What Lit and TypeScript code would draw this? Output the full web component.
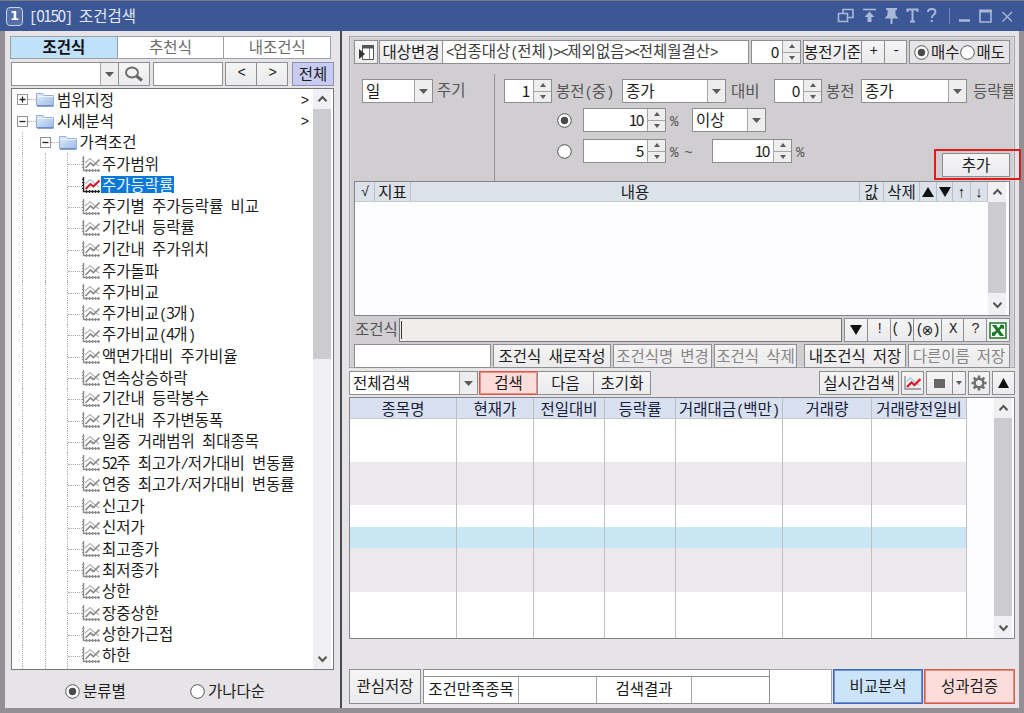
import { LitElement, html, css, svg } from "lit";
import { customElement } from "lit/decorators.js";

// Hangul keeps the page font; runs of other characters take a half-width cell each.
const t = (s: string) =>
  s.split(/([\uac00-\ud7a3]+|[0-9]+)/).filter(Boolean).map((p) =>
    /[\uac00-\ud7a3]/.test(p) ? p : html`<span class=${/[0-9]/.test(p) ? "d" : "n"}>${p}</span>`);

const w = (n: number) => `width:${n}px`;

const leaves = [
  "주가범위", "주가등락률", "주기별 주가등락률 비교", "기간내 등락률", "기간내 주가위치", "주가돌파", "주가비교",
  "주가비교(3개)", "주가비교(4개)", "액면가대비 주가비율", "연속상승하락", "기간내 등락봉수", "기간내 주가변동폭",
  "일중 거래범위 최대종목", "52주 최고가/저가대비 변동률", "연중 최고가/저가대비 변동률", "신고가", "신저가",
  "최고종가", "최저종가", "상한", "장중상한", "상한가근접", "하한",
];

const chart = (on: boolean) => html`<svg class="chart" width="18" height="16" viewBox="0 0 18 16" fill="none">
  <path d="M1.5 0V14.5H18" stroke=${on ? "#222" : "#8d8d8d"} stroke-width="1.4"/>
  <path d="M0 2.5H1.5M0 5.5H1.5M0 8.5H1.5M0 11.5H1.5M4.5 13V16M7.5 13V16M10.5 13V16M13.5 13V16M16.5 13V16" stroke=${on ? "#222" : "#8d8d8d"}/>
  <path d="M3 7L8 2.5L12 6L17 10" stroke=${on ? "#aac4d6" : "#b5b5b5"} stroke-width="1.2"/>
  <path d="M3.5 12L8.5 7L11.5 9.5L17.5 3.5" stroke=${on ? "#d8141c" : "#8d8d8d"} stroke-width=${on ? 2 : 1.7}/>
</svg>`;

const chartButton = html`<svg width="17" height="14" viewBox="0 0 17 14" fill="none">
  <path d="M1 0V13H17" stroke="#8c8c8c" stroke-width="1.3"/>
  <path d="M2.500 5.500L6 2L9.500 5L15 9" stroke="#a8cbe0" stroke-width="1.400"/>
  <path d="M3 11L7.500 6.500L10.500 9L16.500 3" stroke="#d8141c" stroke-width="2.200"/>
</svg>`;

const folder = html`<svg class="folder" width="18" height="15" viewBox="0 0 18 15">
  <defs><linearGradient id="f" x1="0" y1="0" x2="1" y2="1"><stop offset="0" stop-color="#e3edfb"/><stop offset="1" stop-color="#9dbbe8"/></linearGradient></defs>
  <path d="M.5 13.5V1.5H7L8.5 3.5H17.5V13.5Z" fill="url(#f)" stroke="#9ab0d3"/>
  <path d="M1 14H17.5" stroke="#5e7fb5" stroke-width="1.4"/><path d="M1.5 4.5H17" stroke="#f1f6fd"/>
</svg>`;

const box = (plus: boolean) => html`<svg class="exp" width="11" height="11" viewBox="0 0 11 11" fill="#fff">
  <rect x=".5" y=".5" width="10" height="10" stroke="#929292"/>
  <path d=${plus ? "M2.5 5.5H8.5M5.5 2.5V8.5" : "M2.5 5.5H8.5"} stroke="#222" stroke-width="1.3"/></svg>`;

const chev = (up: boolean) => html`<svg width="11" height="8" viewBox="0 0 11 8" fill="none">
  <path d=${up ? "M1.5 6.3L5.5 2L9.5 6.3" : "M1.5 1.7L5.5 6L9.5 1.7"} stroke="#555" stroke-width="2"/></svg>`;

const tri = (up: boolean, x: number, y: number, c = "#5c5c5c") => html`<svg width=${x} height=${y} viewBox="0 0 10 10" preserveAspectRatio="none">
  <path d=${up ? "M5 0L10 10H0Z" : "M0 0H10L5 10Z"} fill=${c}/></svg>`;

const radio = (on: boolean) => html`<svg class="radio" width="15" height="15" viewBox="0 0 15 15">
  <circle cx="7.5" cy="7.5" r="6.8" fill="#fff" stroke="#555"/>${on ? svg`<circle cx="7.5" cy="7.5" r="3.7" fill="#4a4a4a"/>` : ""}</svg>`;

const combo = (s: string, width: number, drop = 18) => html`<div class="field" style=${w(width)}>
  <span class="val">${t(s)}</span><span class="drop" style=${w(drop)}>${tri(false, 9, 5)}</span></div>`;

const spin = (s: string, width: number) => html`<div class="field" style=${w(width)}>
  <span class="val r">${t(s)}</span><span class="spin"><b>${tri(true, 6, 4)}</b><b>${tri(false, 6, 4)}</b></span></div>`;

const btn = (c: unknown, width: number, cls = "") => html`<div class="btn ${typeof c === "string" ? "txt" : ""} ${cls}" style=${w(width)}>${typeof c === "string" ? t(c) : c}</div>`;

const scroll = (thumb: number) => html`<div class="scroll"><span class="arr">${chev(true)}</span>
  <span class="thumb" style="height:${thumb}px"></span><span class="fill"></span><span class="arr">${chev(false)}</span></div>`;

@customElement("app-root")
export class AppRoot extends LitElement {
  static styles = css`
    :host { display: block; width: 1024px; height: 713px; overflow: hidden; }
    * { box-sizing: border-box; }
    svg { display: block; flex: none; }
    .win { position: relative; height: 713px; display: flex; flex-direction: column; background: #e6e4e7;
      font: 15.5px/20px "Noto Sans CJK KR", sans-serif; color: #1c1c1c; white-space: nowrap; }
    .n { font-family: "Liberation Mono", monospace; font-size: 14px; letter-spacing: -1.25px; white-space: pre; line-height: 1; }
    .d { letter-spacing: -1.45px; }
    .o { font: 14px/14px "DejaVu Sans", sans-serif; margin: 0 -1px; }
    .title { height: 31px; border-top: 1px solid #777b87; background: #3c5796; color: #e3e9f5; display: flex;
      align-items: center; padding: 0 9px 0 6px; flex: none; }
    .badge { width: 17px; height: 19px; border: 1.5px solid #c9d3e9; border-radius: 4px; background: #566fa9; color: #fff;
      font: bold 13px/16px "DejaVu Sans", sans-serif; text-align: center; margin-right: 6px; }
    .title .name { flex: 1; padding-bottom: 2px; }
    .body { flex: 1; display: flex; min-height: 0; border: solid #929094; border-width: 0 5px 5px; }
    .left { width: 335px; padding: 5px 0 0 5px; }
    .div { width: 2px; background: #4c4b50; }
    .right { flex: 1; padding: 5px 0 0 7px; min-width: 0; }
    .row { display: flex; }
    .tabs { width: 321px; height: 23px; border: 1px solid #98a0a8; }
    .tabs span { flex: 1; text-align: center; background: #fff; color: #6b6b6b; line-height: 18px; }
    .tabs span + span { border-left: 1px solid #98a0a8; }
    .tabs .on { background: #bfe1fa; color: #111; font-weight: 700; }
    .field, .btn { height: 24px; border: 1px solid #8e8d90; background: #fff; display: flex; flex: none; }
    .val { flex: 1; padding-left: 3px; line-height: 20px; overflow: hidden; }
    .dimtext { color: #3c3c3c; line-height: 18px; }
    .r { text-align: right; padding-right: 4px; }
    .drop, .spin { width: 18px; background: #efeeef; border-left: 1px solid #a5a4a6; display: flex; align-items: center; justify-content: center; }
    .spin { flex-direction: column; }
    .spin b { flex: 1; width: 100%; display: flex; align-items: center; justify-content: center; }
    .spin b + b { border-top: 1px solid #a5a4a6; }
    .btn { background: linear-gradient(#f6f5f6, #ebeaec); align-items: center; justify-content: center; }
    .txt { padding-bottom: 3px; }
    .off { color: #858585; }
    .join { margin-left: -1px; }
    .blue { background: #cbe4fa; border-color: #3f66bd; box-shadow: inset 0 0 0 1px #6f93d6; }
    .red { background: #fddcda; border-color: #d8574c; box-shadow: inset 0 0 0 1px #ec8e86; }
    .lav { background: #c8ccf2; border-color: #8c90b4; }
    .search { margin-top: 3px; padding-left: 1px; }
    .tree { margin: 2px 0 0 1px; width: 323px; height: 582px; border: 1px solid #77767a; background: #fff; display: flex; padding-right: 2px; }
    .items { flex: 1; display: flex; flex-direction: column; padding-left: 10px; }
    .node { height: 21.38px; flex: none; display: flex; align-items: center; }
    .g { align-self: stretch; width: 22.5px; border-left: 1px dotted #b0b0b0; flex: none; }
    .twig { width: 14px; border-top: 1px dotted #aaa; flex: none; margin-top: 2px; }
    .h { width: 8px; border-top: 1px dotted #aaa; flex: none; }
    .exp { margin-left: -5px; }
    .folder { margin-right: 2px; }
    .node .lbl { line-height: 18px; padding: 0 1px; margin-bottom: 2px; }
    .chart + .lbl { margin-left: 1px; }
    .node .sel { background: #0a78d6; color: #eaf4ff; line-height: 16px; height: 17px; margin-bottom: 1px; }
    .more { margin: 0 0 4px auto; padding-right: 5px; }
    .rest { flex: 1; display: flex; }
    .scroll { width: 18px; background: #f0eff1; display: flex; flex-direction: column; flex: none; }
    .arr { height: 20px; display: flex; align-items: center; justify-content: center; flex: none; }
    .thumb { background: #cccbce; flex: none; }
    .fill { flex: 1; }
    .modes { padding: 10px 0 0 55px; align-items: center; }
    .modes span { margin-bottom: 2px; }
    .modes .radio { margin-right: 3px; }
    .group { width: 666px; height: 332px; border: 1px solid #a4a3a6; background: #d0ced1; padding: 3px 0 0 4px; color: #1c1c1c; box-shadow: inset 0 0 0 1px #dddcde; }
    .side { width: 101px; margin-left: 2px; background: #e6e4e7; padding: 0 1px; }
    .side span { margin-bottom: 3px; }
    .side .radio { margin-right: 2px; }
    .opts { height: 117px; }
    .cyc { width: 140px; padding: 15px 0 0 8px; display: flex; }
    .dim { color: #555; padding-left: 4px; line-height: 20px; }
    .cyc .dim { line-height: 21px; }
    .line .dim { margin-bottom: 2px; }
    .cond { border-left: 1px solid #929194; margin-top: 10px; padding: 5px 0 0 9px; flex: 1; overflow: hidden; }
    .line { display: flex; height: 24px; align-items: center; }
    .grid1 { width: 656px; height: 135px; border: 1px solid #858488; background: #fdfdff; display: flex; padding-right: 3px; }
    .grid1 .main { flex: 1; min-width: 0; }
    .hd { display: flex; height: 20px; background: #dce2ea; border-bottom: 1px solid #c5cad2; }
    .hd > span { border-right: 1px solid #b9bfc8; line-height: 19px; flex: none; display: flex; align-items: center; justify-content: center; }
    .hd .arrow { font: 15px/18px "Liberation Sans", sans-serif; }
    .formula { margin-top: 2px; }
    .formula .dim { padding-left: 1px; width: 45px; }
    .expr { width: 443px; background: #efeeea; border-color: #77767a; padding: 2px 1px; }
    .caret { width: 1px; background: #333; }
    .names { margin-top: 2px; }
    .bar { margin-top: 3px; width: 666px; }
    .bar .gap { flex: 1; }
    .grid2 { margin-top: 2px; width: 666px; height: 242px; border: 1px solid #858488; background: #fff; display: flex; padding-right: 2px; }
    .cols { width: 617px; flex: none; }
    .cols .hd { background: #d9e0ef; height: 21px; color: #16203a; }
    .cells { display: flex; height: 219px;
      background: linear-gradient(#fff 0 43px, #ebe9eb 43px 86px, #fff 86px 108px, #c9e6f5 108px 129px, #ebe9eb 129px 173px, #fff 173px); }
    .cells span { border-right: 1px solid #c0c0c2; flex: none; }
    .pad { flex: 1; background: #fcfcff; }
    .foot { margin-top: 30px; }
    .foot .btn { height: 35px; }
    .stat { width: 347px; height: 35px; border: 1px solid #8e8d90; background: #fff; margin-left: 2px; padding-top: 6px; flex: none; }
    .stat div { border-top: 1px solid #8e8d90; height: 27px; display: flex; }
    .stat span { border-right: 1px solid #a5a4a6; text-align: center; line-height: 23px; flex: none; }
    .empty { width: 62px; height: 35px; border: 1px solid #a5a4a6; border-left: 0; background: #fff; margin-right: 1px; flex: none; }
    .add { position: absolute; left: 934px; top: 149px; width: 87px; height: 31px; border: 2px solid #e01b1b; padding: 2px 0 0 6px; }
  `;

  render() {
    const cols = [107, 77, 71, 71, 107, 89, 95];
    const heads = ["종목명", "현재가", "전일대비", "등락률", "거래대금(백만)", "거래량", "거래량전일비"];
    return html`<div class="win">
      <div class="title">
        <span class="badge">1</span><span class="name">${t("[0150] 조건검색")}</span>
        <svg width="178" height="20" viewBox="0 0 178 20" fill="none" stroke="#a9b8d8" stroke-width="1.6">
          <path d="M10.500 11.500H16V3.500H6V7"/><path d="M1.500 7.500H10.500V15.500H1.500Z"/>
          <path d="M26 3.500H39"/><path d="M32.500 5.500L37.500 11H34.500V16H30.500V11H27.500Z" fill="#a9b8d8" stroke="none"/>
          <path d="M49 2H60V4H58.500V9L61.500 12.500H55.500V18H53.500V12.500H47.500L50.500 9V4H49Z" fill="#a9b8d8" stroke="none"/>
          <path d="M70.500 6V3.500H80.500V6M75.500 3.500V15.500M73 15.500H78" stroke-width="2"/>
          <path d="M91 6C91 2 98.500 2 98.500 6C98.500 9 94.700 8.500 94.700 12M94.700 14V16" stroke-width="2"/>
          <path d="M112.500 2V18" stroke="#7388b8" stroke-width="1"/>
          <path d="M122 14.500H133" stroke-width="2.500"/>
          <path d="M143 5H154V16H143Z"/><path d="M142.200 5H154.800" stroke-width="3"/>
          <path d="M165.500 6L175 15.500M175 6L165.500 15.500" stroke-width="1.300"/>
        </svg>
      </div>
      <div class="body">
        <div class="left">
          <div class="row tabs"><span class="on">조건식</span><span>추천식</span><span>내조건식</span></div>
          <div class="row search">
            ${combo("", 108)}
            ${btn(html`<svg width="20" height="16" viewBox="0 0 20 16" fill="none" stroke="#666"><ellipse cx="8" cy="6.500" rx="6" ry="5" stroke-width="1.800"/><path d="M12.500 10L18 14.500" stroke-width="3"/></svg>`, 32, "join")}
            <div class="field" style="width:70px;margin-left:3px"></div>
            <div class="row" style="margin-left:2px">${btn("<", 32)}${btn(">", 32, "join")}</div>
            <div style="margin-left:4px">${btn("전체", 42, "lav")}</div>
          </div>
          <div class="tree">
            <div class="items">
              <div class="node">${box(true)}<i class="h"></i>${folder}<span class="lbl">범위지정</span><span class="more">${t(">")}</span></div>
              <div class="node">${box(false)}<i class="h"></i>${folder}<span class="lbl">시세분석</span><span class="more">${t(">")}</span></div>
              <div class="node"><i class="g"></i>${box(false)}<i class="h"></i>${folder}<span class="lbl">가격조건</span></div>
              ${leaves.map((s, i) => html`<div class="node"><i class="g"></i><i class="g"></i><i class="g" style="width:1px"></i><i class="twig"></i>${chart(i === 1)}<span class="lbl ${i === 1 ? "sel" : ""}">${t(s)}</span></div>`)}
              <div class="rest"><i class="g"></i><i class="g"></i><i class="g"></i></div>
            </div>
            ${scroll(250)}
          </div>
          <div class="row modes">${radio(true)}<span style="width:107px">분류별</span>${radio(false)}<span>가나다순</span></div>
        </div>
        <div class="div"></div>
        <div class="right">
          <div class="group">
            <div class="row">
              ${btn(html`<svg width="17" height="17" viewBox="0 0 17 17"><path d="M4.500 1.500H15.500V15.500H4.500Z" fill="#fff" stroke="#555"/><path d="M4 3H16" stroke="#555" stroke-width="3"/><path d="M11.500 4V15" stroke="#888"/><path d="M1 5V15L7 10Z" fill="#333"/></svg>`, 24)}
              <div style="margin-left:1px">${btn("대상변경", 64)}</div>
              <div class="field join" style="width:307px"><span class="val dimtext">${t("<업종대상(전체)><제외없음><전체월결산>")}</span></div>
              <div style="margin-left:2px">${spin("0", 50)}</div>
              <div class="row" style="margin-left:2px">${btn("봉전기준", 59)}${btn("+", 24, "join")}${btn("-", 23, "join")}</div>
              <div class="btn side">${radio(true)}<span>매수</span>${radio(false)}<span>매도</span></div>
            </div>
            <div class="row opts">
              <div class="cyc">${combo("일", 71)}<span class="dim">주기</span></div>
              <div class="cond">
                <div class="line">${spin("1", 48)}<span class="dim" style="width:70px">${t("봉전(중)")}</span>${combo("종가", 104)}<span class="dim" style="width:48px;padding-left:5px">대비</span>${spin("0", 48)}<span class="dim" style="width:39px">봉전</span>${combo("종가", 106)}<span class="dim" style="padding-left:6px;width:46px;overflow:hidden">등락률</span></div>
                <div class="line" style="margin-top:5px;padding-left:53px">${radio(true)}<span style="width:11px"></span>${spin("10", 83)}<span class="dim" style="width:26px">${t("%")}</span>${combo("이상", 74)}</div>
                <div class="line" style="margin-top:7px;padding-left:53px">${radio(false)}<span style="width:11px"></span>${spin("5", 83)}<span class="dim" style="width:46px">${t("% ~")}</span>${spin("10", 80)}<span class="dim">${t("%")}</span></div>
              </div>
            </div>
            <div class="grid1">
              <div class="main">
                <div class="hd"><span style=${w(20)}>${t("√")}</span><span style=${w(36)}>지표</span><span style=${w(449)}>내용</span><span style=${w(24)}>값</span><span style=${w(36)}>삭제</span><span style=${w(17)}>${tri(true, 12, 10, "#111")}</span><span style=${w(16)}>${tri(false, 12, 10, "#111")}</span><span class="arrow" style=${w(18)}>↑</span><span class="arrow" style=${w(17)}>↓</span></div>
              </div>
              ${scroll(91)}
            </div>
            <div class="row formula">
              <span class="dim">조건식</span>
              <div class="field expr"><i class="caret"></i></div>
              <div class="row" style="margin-left:2px">${btn(tri(false, 12, 10, "#111"), 24)}${btn("!", 24, "join")}${btn("( )", 24, "join")}${btn(html`${t("(")}<span class="o">⊗</span>${t(")")}`, 29, "join")}${btn("X", 23, "join")}${btn("?", 24, "join")}
                ${btn(html`<svg width="18" height="17" viewBox="0 0 18 17"><path d="M1 1H17V16H1Z" fill="#fff" stroke="#1d7a27" stroke-width="1.500"/><path d="M3 3L7 3L15 14L11 14Z" fill="#1d7a27"/><path d="M11 3H15V7L12.500 6.500ZM3 14V10.500L6 9.500L7.500 11L5.500 14Z" fill="#1d7a27"/><path d="M9.500 8L13.500 3M4 13.500L8 9" stroke="#1d7a27" stroke-width="2.500"/></svg>`, 24, "join")}</div>
            </div>
            <div class="row names">
              <div class="field" style="width:137px"></div>
              <div class="row" style="margin-left:2px;gap:2px">${btn("조건식 새로작성", 118)}${btn("조건식명 변경", 99, "off")}${btn("조건식 삭제", 83, "off")}</div>
              <div class="row" style="margin-left:7px;gap:2px">${btn("내조건식 저장", 102)}${btn("다른이름 저장", 102, "off")}</div>
            </div>
          </div>
          <div class="row bar">
            ${combo("전체검색", 129)}
            <div class="row" style="margin-left:1px">${btn("검색", 59, "red")}${btn("다음", 57, "join")}${btn("초기화", 58, "join")}</div>
            <span class="gap"></span>
            <div class="row" style="gap:2px">${btn("실시간검색", 80)}${btn(chartButton, 23)}
              <div class="row">${btn(html`<svg width="11" height="9"><rect width="11" height="9" fill="#666"/></svg>`, 27)}${btn(tri(false, 6, 4), 14, "join")}</div>
              ${btn(html`<svg width="16" height="16" viewBox="-8 -8 16 16" fill="none" stroke="#707070"><circle r="4.300" stroke-width="2.400"/>${[0, 45, 90, 135].map((a) => svg`<path transform="rotate(${a})" d="M0 -7.500V-5M0 5V7.500" stroke-width="2.600"/>`)}</svg>`, 22)}
              ${btn(tri(true, 11, 10, "#111"), 23)}</div>
          </div>
          <div class="grid2">
            <div class="cols">
              <div class="hd">${heads.map((h, i) => html`<span style=${w(cols[i])}><b style="font-weight:400">${t(h)}</b></span>`)}</div>
              <div class="cells">${cols.map((c) => html`<span style=${w(c)}></span>`)}</div>
            </div>
            <div class="pad"></div>
            ${scroll(198)}
          </div>
          <div class="row foot">
            ${btn("관심저장", 72)}
            <div class="stat"><div><span style=${w(95)}>조건만족종목</span><span style=${w(78)}></span><span style=${w(95)}>검색결과</span></div></div>
            <div class="empty"></div>
            ${btn("비교분석", 90, "blue")}
            <div style="margin-left:1px">${btn("성과검증", 91, "red")}</div>
          </div>
        </div>
      </div>
      <div class="add">${btn("추가", 68)}</div>
    </div>`;
  }
}
